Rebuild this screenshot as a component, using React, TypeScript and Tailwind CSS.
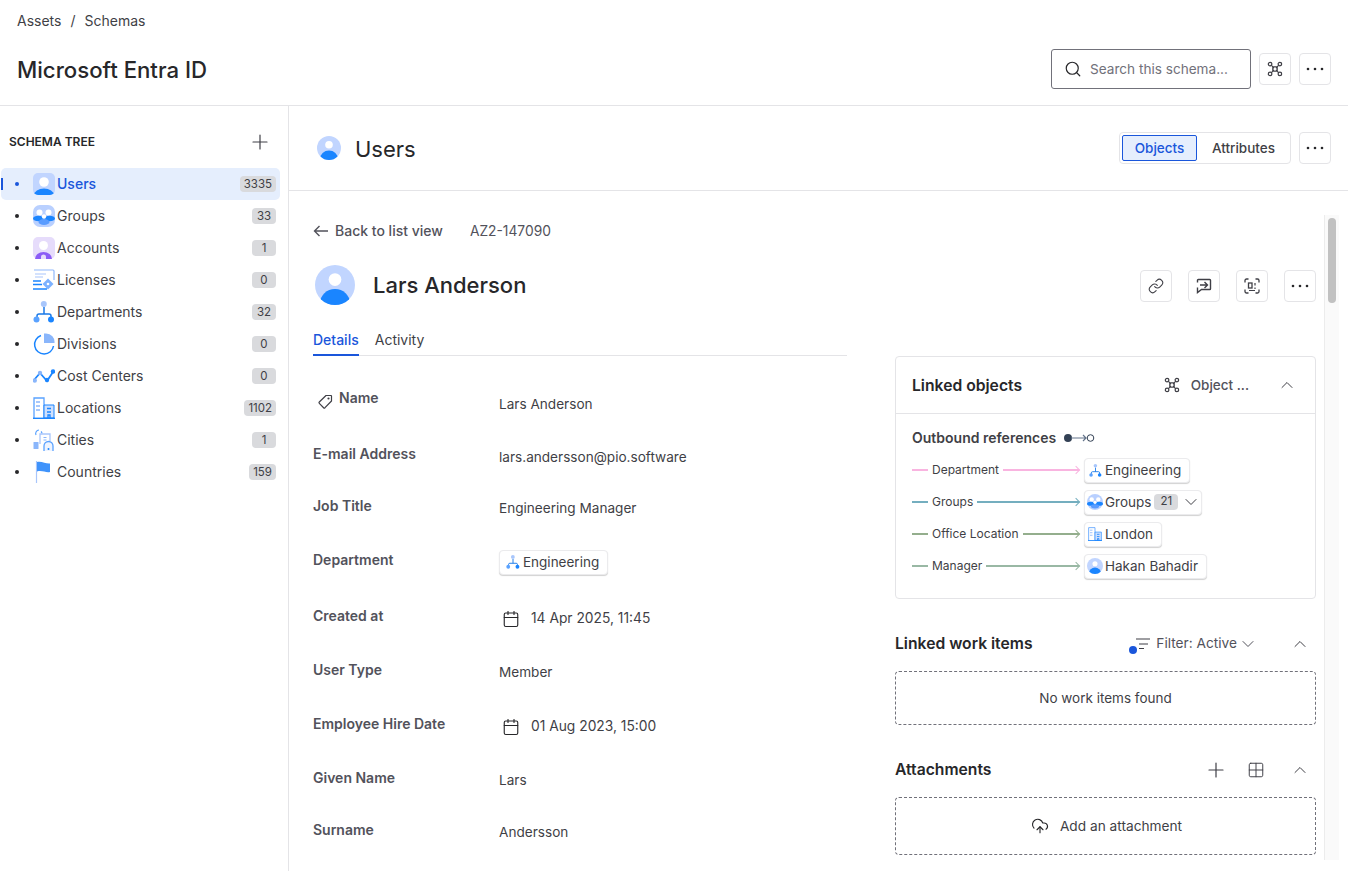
import { Calendar, ChevronDown, ChevronUp, CloudUpload, Grid2x2, Link, Plus, Search } from 'lucide-react'
import type { ReactNode } from 'react'

const font = { fontFamily: 'Inter, sans-serif' }

function UserIcon({ size = 22, round = false }: { size?: number; round?: boolean }) {
  return (
    <svg width={size} height={size} viewBox="0 0 22 22">
      <defs>
        <clipPath id={round ? 'uc-r' : 'uc-s'}>
          {round ? <circle cx="11" cy="11" r="11" /> : <rect width="22" height="22" rx="5" />}
        </clipPath>
      </defs>
      <g clipPath={`url(#${round ? 'uc-r' : 'uc-s'})`}>
        <rect width="22" height="22" fill="#c1d5ff" />
        <circle cx="11" cy={round ? 8 : 9} r={round ? 3.500 : 4.800} fill="#fff" />
        {round ? (
          <ellipse cx="11" cy="21" rx="8.250" ry="7.800" fill="#1a85ff" />
        ) : (
          <ellipse cx="11" cy="22" rx="10" ry="6.500" fill="#1a85ff" />
        )}
      </g>
    </svg>
  )
}

function GroupsIcon({ size = 22 }: { size?: number }) {
  return (
    <svg width={size} height={size} viewBox="0 0 22 22">
      <rect width="22" height="22" rx={size < 20 ? 11 : 7} fill="#b9d0ff" />
      <circle cx="6.500" cy="7.500" r="3" fill="#fff" />
      <circle cx="15.500" cy="7.500" r="3" fill="#fff" />
      <ellipse cx="5.500" cy="13.500" rx="5.500" ry="2.800" fill="#1a85ff" />
      <ellipse cx="16.500" cy="13.500" rx="5.500" ry="2.800" fill="#1a85ff" />
      <circle cx="11" cy="11.500" r="2.200" fill="#fff" />
      <ellipse cx="11" cy="17" rx="5.500" ry="3" fill="#5a9cff" />
    </svg>
  )
}

function AccountsIcon() {
  return (
    <svg width="22" height="22" viewBox="0 0 22 22">
      <rect width="22" height="22" rx="5" fill="#e6dcfb" />
      <circle cx="10.500" cy="8.500" r="4.500" fill="#fff" />
      <path d="M2 22a8.500 7 0 0 1 17 0h-6v-2a2.500 2.500 0 0 0-5 0v2z" fill="#8b5cf6" />
    </svg>
  )
}

function LicensesIcon() {
  return (
    <svg width="22" height="22" viewBox="0 0 22 22" fill="none">
      <path d="M1 1h19a1 1 0 0 1 1 1v9" stroke="#8fb8fb" strokeWidth="1.200" />
      <path d="M2 5h11M2 8h8" stroke="#a9c6fb" strokeWidth="1.200" />
      <path d="M0 12h8M0 15.500h9M0 20h14" stroke="#1a85ff" strokeWidth="1.400" />
      <path d="M15 9.500l5.500 5.500-5.500 5.500-5.500-5.500z" fill="#7db2ff" />
      <circle cx="15" cy="15" r="1.300" fill="#fff" />
    </svg>
  )
}

function DepartmentsIcon({ size = 22 }: { size?: number }) {
  return (
    <svg width={size} height={size} viewBox="0 0 22 22" fill="none">
      <path d="M4 18v-3a2 2 0 0 1 2-2h10a2 2 0 0 1 2 2v3M11 6v7" stroke="#1a7ae8" strokeWidth="1.500" />
      <circle cx="10.800" cy="3" r="3" fill="#a8c6fb" />
      <circle cx="3.500" cy="18.500" r="3" fill="#5aa2ff" />
      <circle cx="18" cy="18.500" r="3" fill="#1a85ff" />
    </svg>
  )
}

function DivisionsIcon() {
  return (
    <svg width="22" height="22" viewBox="0 0 22 22" fill="none">
      <path d="M8 2.500A9.500 9.500 0 1 0 20.500 13" stroke="#1a85ff" strokeWidth="1.500" />
      <path d="M11 0.500h2a8.500 8.500 0 0 1 8.500 9.500H11z" fill="#8ab6fb" />
    </svg>
  )
}

function CostIcon() {
  return (
    <svg width="22" height="22" viewBox="0 0 22 22" fill="none">
      <path d="M1 15l6-7 7 8 6-9" stroke="#1a85ff" strokeWidth="1.800" />
      <circle cx="7" cy="8" r="2.200" fill="#8ab6fb" />
      <circle cx="14" cy="15" r="2.200" fill="#1a85ff" />
      <circle cx="20" cy="6.500" r="2.200" fill="#1a85ff" />
      <circle cx="1.800" cy="15.500" r="2.200" fill="#8ab6fb" />
    </svg>
  )
}

function LocationsIcon({ size = 22 }: { size?: number }) {
  return (
    <svg width={size} height={size} viewBox="0 0 22 22" fill="none">
      <path d="M1 21V1h10v20" stroke="#5aa2ff" strokeWidth="1.300" />
      <path d="M3 5h4M3 9h4M3 13h4" stroke="#8ab6fb" strokeWidth="1.300" />
      <path d="M11 8h10v13H11z" fill="#cfe0fd" stroke="#1a85ff" strokeWidth="1" />
      <path d="M14 11.500h4M14 15h4M15 21v-3h2v3" stroke="#1a85ff" strokeWidth="1.300" />
      <path d="M0 21.300h22" stroke="#1a85ff" strokeWidth="1.400" />
    </svg>
  )
}

function CitiesIcon() {
  return (
    <svg width="22" height="22" viewBox="0 0 22 22" fill="none">
      <path d="M3 6a3.500 3.500 0 0 1 3-5M8 2.500a3 3 0 0 1 1 2" stroke="#5aa2ff" strokeWidth="1.200" />
      <path d="M7 15V5h10v7" stroke="#a9c6fb" strokeWidth="1.300" />
      <path d="M10.500 8.500h3M10.500 11h3" stroke="#8ab6fb" strokeWidth="1" />
      <rect x="0.500" y="13" width="5" height="7" rx="0.500" fill="#8ab6fb" />
      <path d="M11 22v-5a4.500 4.500 0 0 1 9 0v5" stroke="#5aa2ff" strokeWidth="1.300" fill="#eef4ff" />
      <circle cx="15.500" cy="20" r="1" fill="#1a85ff" />
    </svg>
  )
}

function CountriesIcon() {
  return (
    <svg width="22" height="22" viewBox="0 0 22 22" fill="none">
      <path d="M3.500 0v22" stroke="#a9c6fb" strokeWidth="1.200" />
      <path d="M4 1c5-1 9 2 13 1.500V11c-4 1-8-2-13-.500z" fill="#3f93fb" />
    </svg>
  )
}

function GraphIcon({ size = 18, className = '' }: { size?: number; className?: string }) {
  return (
    <svg width={size} height={size} viewBox="0 0 18 18" fill="none" className={className} stroke="currentColor" strokeWidth="1.400">
      <path d="M5 5l3 3m2 2l3 3M13 5l-3 3m-2 2l-3 3M6.500 6.500h5v5h-5z" strokeWidth="1.300" />
      <circle cx="3.500" cy="3.500" r="2" />
      <circle cx="14.500" cy="3.500" r="2" />
      <circle cx="3.500" cy="14.500" r="2" />
      <circle cx="14.500" cy="14.500" r="2" />
    </svg>
  )
}

function DotsIcon() {
  return (
    <svg width="18" height="4" viewBox="0 0 18 4" fill="#27272a">
      <circle cx="2" cy="2" r="1.300" />
      <circle cx="9" cy="2" r="1.300" />
      <circle cx="16" cy="2" r="1.300" />
    </svg>
  )
}

function CommentArrowIcon() {
  return (
    <svg width="16" height="16" viewBox="0 0 16 16" fill="none" stroke="#3f3f46" strokeWidth="1.400">
      <path d="M1.500 4.500V2.300a.8.800 0 0 1 .8-.8h11.400a.8.800 0 0 1 .8.800v8.400a.8.800 0 0 1-.8.800H5.500l-4 3V9.500" />
      <path d="M4 7h7.500M8.500 4l3 3-3 3" />
    </svg>
  )
}

function ScanIcon() {
  return (
    <svg width="16" height="16" viewBox="0 0 16 16" fill="none" stroke="#3f3f46" strokeWidth="1.300">
      <path d="M1 4.500V2.500A1.500 1.500 0 0 1 2.500 1h2M11.500 1h2A1.500 1.500 0 0 1 15 2.500v2M15 11.500v2a1.500 1.500 0 0 1-1.500 1.500h-2M4.500 15h-2A1.500 1.500 0 0 1 1 13.500v-2" />
      <rect x="4.500" y="5" width="3.500" height="5" />
      <path d="M11 5v2.500M11 9.500v1.500M5 12.500h6" strokeWidth="1.200" />
    </svg>
  )
}

function TagIcon() {
  return (
    <svg width="16" height="16" viewBox="0 0 16 16" fill="none" stroke="#3f3f46" strokeWidth="1.200" className="mt-2 shrink-0">
      <path d="M9 1.500h5a.5.500 0 0 1 .5.500v5L8 13.700a1 1 0 0 1-1.400 0L2.300 9.400a1 1 0 0 1 0-1.400z" strokeLinejoin="round" />
      <circle cx="11.500" cy="4.500" r=".5" />
    </svg>
  )
}

const TREE: { name: string; count: string; icon: ReactNode }[] = [
  { name: 'Users', count: '3335', icon: <UserIcon /> },
  { name: 'Groups', count: '33', icon: <GroupsIcon /> },
  { name: 'Accounts', count: '1', icon: <AccountsIcon /> },
  { name: 'Licenses', count: '0', icon: <LicensesIcon /> },
  { name: 'Departments', count: '32', icon: <DepartmentsIcon /> },
  { name: 'Divisions', count: '0', icon: <DivisionsIcon /> },
  { name: 'Cost Centers', count: '0', icon: <CostIcon /> },
  { name: 'Locations', count: '1102', icon: <LocationsIcon /> },
  { name: 'Cities', count: '1', icon: <CitiesIcon /> },
  { name: 'Countries', count: '159', icon: <CountriesIcon /> },
]

function Sidebar() {
  return (
    <aside className="w-[289px] shrink-0 border-r border-[#e4e4e7]">
      <div className="flex h-[62px] items-center justify-between pl-[9px] pr-4 pt-[10px]">
        <span className="text-xs font-semibold text-[#27272a]">SCHEMA TREE</span>
        <Plus size={24} strokeWidth={1.200} className="text-[#3f3f46]" />
      </div>
      <ul className="pl-px pr-2">
        {TREE.map((t, i) => (
          <li
            key={t.name}
            className={`relative flex h-8 items-center rounded-[5px] pr-[4px] text-sm ${i === 0 ? 'bg-[#e5eefd] font-medium text-[#1a56db]' : 'text-[#3f3f46]'}`}
          >
            {i === 0 && <span className="absolute left-0 top-[10px] h-3 w-[2px] bg-[#1a56db]" />}
            <span className={`ml-[14px] h-1 w-1 rounded-full ${i === 0 ? 'bg-[#1a56db]' : 'bg-[#27272a]'}`} />
            <span className="ml-[14px] mr-[2px] flex w-[22px] justify-center">{t.icon}</span>
            <span className="flex-1">{t.name}</span>
            <span className="flex h-4 min-w-6 items-center justify-center rounded-sm bg-[#d9dadd] px-1 text-[11.5px] font-normal text-[#3f3f46]">{t.count}</span>
          </li>
        ))}
      </ul>
    </aside>
  )
}

function IconButton({ children }: { children: ReactNode }) {
  return (
    <button className="flex h-8 w-8 items-center justify-center rounded border border-[#e4e4e7] bg-white text-[#3f3f46]">
      {children}
    </button>
  )
}

function Chip({ icon, children, className = '' }: { icon: ReactNode; children: ReactNode; className?: string }) {
  return (
    <span className={`inline-flex h-[25px] items-center rounded border border-[#ebebed] bg-white text-[13.5px] text-[#3f3f46] shadow-[0_1px_1px_rgba(0,0,0,0.18)] ${className}`}>
      <span className="mr-[2px] flex w-4 justify-center">{icon}</span>
      {children}
    </span>
  )
}

const FIELDS: { label: string; h: string; top: string; value: ReactNode; icon?: boolean }[] = [
  { label: 'Name', h: 'h-[56px]', top: 'pt-[7px]', icon: true, value: 'Lars Anderson' },
  { label: 'E-mail Address', h: 'h-[52px]', top: 'pt-1', value: 'lars.andersson@pio.software' },
  { label: 'Job Title', h: 'h-[54px]', top: 'pt-[3px]', value: 'Engineering Manager' },
  {
    label: 'Department',
    h: 'h-[56px]',
    top: '',
    value: <Chip icon={<DepartmentsIcon size={14} />} className="pl-[5px] pr-2">Engineering</Chip>,
  },
  { label: 'Created at', h: 'h-[54px]', top: 'pt-[3px]', value: <DateValue text="14 Apr 2025, 11:45" /> },
  { label: 'User Type', h: 'h-[54px]', top: 'pt-[3px]', value: 'Member' },
  { label: 'Employee Hire Date', h: 'h-[54px]', top: 'pt-[3px]', value: <DateValue text="01 Aug 2023, 15:00" /> },
  { label: 'Given Name', h: 'h-[52px]', top: 'pt-[3px]', value: 'Lars' },
  { label: 'Surname', h: 'h-[52px]', top: 'pt-[3px]', value: 'Andersson' },
]

function DateValue({ text }: { text: string }) {
  return (
    <span className="flex items-center gap-[11px] pl-[3px] text-[13.8px]">
      <Calendar size={18} strokeWidth={1.500} className="text-[#27272a]" />
      {text}
    </span>
  )
}

function DetailColumn() {
  return (
    <div className="w-[534px] shrink-0">
      <div className="flex items-center pt-[30px] text-sm font-medium text-[#52525b]">
        <span className="flex items-center gap-[6px]">
          <svg width="16" height="12" viewBox="0 0 16 12" fill="none" stroke="#52525b" strokeWidth="1.400">
            <path d="M15 6H1.500M6.500 1l-5 5 5 5" />
          </svg>
          Back to list view
        </span>
        <span className="ml-[27px] pt-px text-[13.8px] font-normal">AZ2-147090</span>
      </div>
      <div className="mt-[23px] flex items-center pl-[2px]">
        <UserIcon size={40} round />
        <h2 className="ml-[18px] pt-[2px] text-[22px] font-medium text-[#27272a]">Lars Anderson</h2>
      </div>
      <div className="mt-[25px] flex gap-4 border-b border-[#e4e4e7] text-sm">
        <span className="-mb-px border-b-2 border-[#1a56db] pb-1 font-medium text-[#1a56db]">Details</span>
        <span className="text-[#3f3f46]">Activity</span>
      </div>
      <div className="mt-8">
        {FIELDS.map((f) => (
          <div key={f.label} className={`flex text-sm ${f.h}`}>
            <div className={`flex h-5 w-[186px] shrink-0 items-center font-semibold text-[#52525b] ${f.icon ? 'gap-[6px] pl-[4px]' : ''}`}>
              {f.icon && <TagIcon />}
              {f.label}
            </div>
            <div className={`text-[13.6px] text-[#3f3f46] ${f.top}`}>{f.value}</div>
          </div>
        ))}
      </div>
    </div>
  )
}

const LINKS: { label: string; color: string; chip: ReactNode }[] = [
  { label: 'Department', color: '#f9b4e0', chip: <Chip icon={<DepartmentsIcon size={13} />} className="pl-[2px] pr-2">Engineering</Chip> },
  {
    label: 'Groups',
    color: '#74aebf',
    chip: (
      <Chip icon={<GroupsIcon size={16} />} className="pl-[2px]">
        Groups
        <span className="ml-[3px] flex h-4 w-6 items-center justify-center rounded-sm bg-[#d9dadd] text-[11.5px]">21</span>
        <ChevronDown size={20} strokeWidth={1.200} className="ml-[3px]" />
      </Chip>
    ),
  },
  { label: 'Office Location', color: '#94ae8d', chip: <Chip icon={<LocationsIcon size={14} />} className="pl-[2px] pr-2">London</Chip> },
  { label: 'Manager', color: '#99b8a4', chip: <Chip icon={<UserIcon size={16} round />} className="pl-[2px] pr-2">Hakan Bahadir</Chip> },
]

function LinkedObjects() {
  return (
    <div className="rounded-sm border border-[#e4e4e7]">
      <div className="flex h-[57px] items-center border-b border-[#e4e4e7] pl-4 pr-[18px]">
        <span className="flex-1 pt-[2px] text-[15.7px] font-semibold text-[#27272a]">Linked objects</span>
        <GraphIcon size={16} className="text-[#3f3f46]" />
        <span className="ml-[11px] text-[13.5px] font-medium text-[#52525b]">Object ...</span>
        <ChevronUp size={20} strokeWidth={1.200} className="ml-[28px] text-[#3f3f46]" />
      </div>
      <div className="px-4 pb-4 pt-[14px]">
        <div className="flex items-center text-sm font-semibold text-[#3f3f46]">
          Outbound references
          <svg width="31" height="10" viewBox="0 0 31 10" fill="none" className="ml-2">
            <circle cx="4" cy="5" r="4" fill="#334155" />
            <path d="M7 5h14.500M19 2l3 3-3 3" stroke="#64748b" strokeWidth="1.200" />
            <circle cx="26.500" cy="5" r="3.300" stroke="#334155" strokeWidth="1" />
          </svg>
        </div>
        <div className="mt-[6px]">
          {LINKS.map((l) => (
            <div key={l.label} className="flex h-8 items-center">
              <div className="mr-[5px] flex w-[167px] shrink-0 items-center text-xs text-[#3f3f46]">
                <span className="h-[1.500px] w-4" style={{ backgroundColor: l.color }} />
                <span className="mx-1">{l.label}</span>
                <span className="h-[1.500px] flex-1" style={{ backgroundColor: l.color }} />
                <span className="-ml-[6px] h-[6px] w-[6px] rotate-45 border-r border-t" style={{ borderColor: l.color }} />
              </div>
              {l.chip}
            </div>
          ))}
        </div>
      </div>
    </div>
  )
}

function SideColumn() {
  return (
    <div className="ml-[48px] flex w-[421px] shrink-0 flex-col">
      <div className="flex justify-end gap-4 pt-[79px]">
        <IconButton>
          <Link size={16} strokeWidth={1.600} />
        </IconButton>
        <IconButton>
          <CommentArrowIcon />
        </IconButton>
        <IconButton>
          <ScanIcon />
        </IconButton>
        <IconButton>
          <DotsIcon />
        </IconButton>
      </div>
      <div className="mt-[54px]">
        <LinkedObjects />
      </div>
      <div className="mt-[35px] flex h-5 items-center pr-[6px]">
        <span className="flex-1 text-[15.7px] font-semibold text-[#27272a]">Linked work items</span>
        <span className="relative mr-[5px] flex">
          <svg width="16" height="14" viewBox="0 0 16 14" fill="none" stroke="#3f3f46" strokeWidth="1.200">
            <path d="M1 2h14M4 7h9M4 11.500h5" />
          </svg>
          <span className="absolute -left-[6px] top-[9px] h-2 w-2 rounded-full bg-[#1a56db]" />
        </span>
        <span className="pb-[2px] text-[13.7px] text-[#52525b]">Filter: Active</span>
        <ChevronDown size={20} strokeWidth={1.200} className="ml-px text-[#52525b]" />
        <ChevronUp size={20} strokeWidth={1.200} className="ml-[32px] text-[#3f3f46]" />
      </div>
      <div className="mt-[17px] flex h-[54px] shrink-0 items-center justify-center rounded-sm border border-dashed border-[#71717a] text-[13.5px] text-[#3f3f46]">
        No work items found
      </div>
      <div className="mt-[35px] flex h-5 items-center pr-[6px]">
        <span className="flex-1 text-[15.7px] font-semibold text-[#27272a]">Attachments</span>
        <Plus size={24} strokeWidth={1.200} className="text-[#3f3f46]" />
        <Grid2x2 size={18} strokeWidth={1.300} className="ml-[19px] text-[#3f3f46]" />
        <ChevronUp size={20} strokeWidth={1.200} className="ml-[25px] text-[#3f3f46]" />
      </div>
      <div className="mt-[17px] flex h-[58px] shrink-0 items-center justify-center gap-[11px] rounded-sm border border-dashed border-[#71717a] pl-[2px] text-[13.7px] text-[#3f3f46]">
        <CloudUpload size={18} strokeWidth={1.500} className="text-[#27272a]" />
        Add an attachment
      </div>
    </div>
  )
}

export default function App() {
  return (
    <div style={font} className="flex h-[871px] flex-col overflow-hidden bg-white">
      <header className="h-[106px] shrink-0 border-b border-[#e4e4e7] px-[17px]">
        <div className="flex h-[42px] items-center gap-[9px] text-sm text-[#3f3f46]">
          <span>Assets</span>
          <span>/</span>
          <span>Schemas</span>
        </div>
        <div className="mt-[7px] flex h-10 items-center justify-between">
          <h1 className="pt-[2px] text-[22.2px] font-medium text-[#27272a]">Microsoft Entra ID</h1>
          <div className="flex items-center gap-2">
            <div className="flex h-10 w-[200px] items-center gap-2 rounded-[3px] border border-[#71717a] pl-3 text-[13.6px] text-[#71717a]">
              <Search size={18} strokeWidth={1.600} className="text-[#27272a]" />
              Search this schema...
            </div>
            <IconButton>
              <GraphIcon size={16} />
            </IconButton>
            <IconButton>
              <DotsIcon />
            </IconButton>
          </div>
        </div>
      </header>
      <div className="flex min-h-0 flex-1">
        <Sidebar />
        <main className="flex min-w-0 flex-1 flex-col">
          <div className="flex h-[85px] shrink-0 items-center border-b border-[#e4e4e7] pl-[28px] pr-[17px]">
            <UserIcon size={24} round />
            <h2 className="ml-[14px] flex-1 pt-[3px] text-[22px] text-[#27272a]">Users</h2>
            <div className="flex h-8 items-center rounded border border-[#e4e4e7] p-[2px] text-[13.5px] font-medium">
              <span className="flex h-[26px] w-[75px] items-center justify-center rounded-[2px] border border-[#1a56db] bg-[#e5eefd] text-[#1a56db]">Objects</span>
              <span className="flex h-[26px] w-[91px] items-center justify-center pl-[2px] text-[#3f3f46]">Attributes</span>
            </div>
            <span className="ml-2">
              <IconButton>
                <DotsIcon />
              </IconButton>
            </span>
          </div>
          <div className="flex min-h-0 flex-1 pl-[24px]">
            <DetailColumn />
            <SideColumn />
            <div className="ml-2 mt-[24px] h-[645px] w-[15px] shrink-0 border-l border-[#ececec] bg-[#fafafa]">
              <div className="mx-auto mt-[3px] h-[85px] w-2 rounded bg-[#c1c1c1]" />
            </div>
          </div>
        </main>
      </div>
    </div>
  )
}
